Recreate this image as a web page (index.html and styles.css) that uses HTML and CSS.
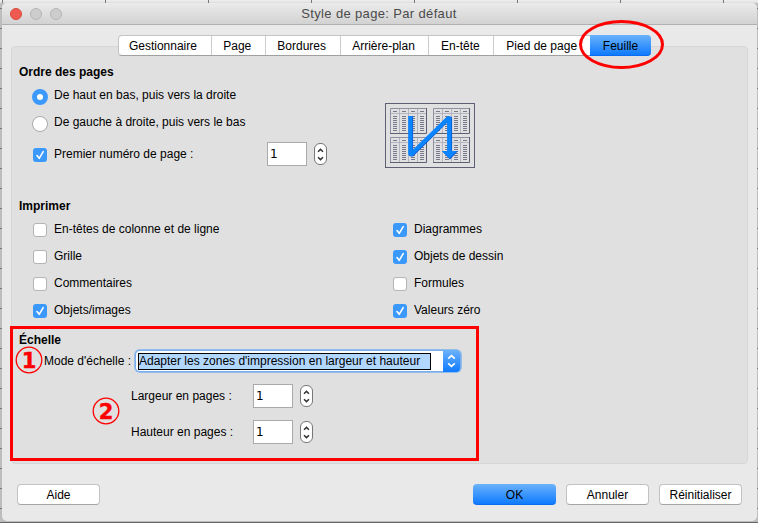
FILE: index.html
```html
<!DOCTYPE html>
<html lang="fr">
<head>
<meta charset="utf-8">
<title>Style de page: Par défaut</title>
<link rel="stylesheet" href="styles.css">
</head>
<body>
<svg width="0" height="0" class="defs" aria-hidden="true">
  <symbol id="check" viewBox="0 0 14 14"><path d="M4 7.6 6.2 10.3 10.2 3.7" fill="none" stroke="#fff" stroke-width="1.6" stroke-linecap="round" stroke-linejoin="round"/></symbol>
  <symbol id="arrows" viewBox="0 0 11 20"><path d="M3 7.8 5.5 5.4 8 7.8M3 13.2 5.5 15.6 8 13.2" fill="none" stroke="#333" stroke-width="1.5"/></symbol>
  <pattern id="lines" width="9" height="2" patternUnits="userSpaceOnUse"><path d="M3 .5h4" stroke="#77798a"/></pattern>
  <symbol id="sheet" viewBox="0 0 37 26">
    <path d="M0 5.5h36M9.5 0v25M18.5 0v25M27.5 0v25" stroke="#b4b5c2" fill="none"/>
    <path d="M3 3.5h4M12 3.5h4M21 3.5h4M30 3.5h4" stroke="#77798a"/>
    <rect y="8" width="36" height="16" fill="url(#lines)"/>
    <path d="M.5 26V.5H37" fill="none" stroke="#9092a3"/>
    <path d="M0 25.5h36.5V0" fill="none" stroke="#5d5f75"/>
  </symbol>
</svg>
<div class="window">
  <header class="titlebar">
    <div class="lights"><i class="close"></i><i></i><i></i></div>
    <h1>Style de page: Par défaut</h1>
  </header>
  <nav class="tabs">
    <a class="t1">Gestionnaire</a><a class="t2">Page</a><a class="t3">Bordures</a><a class="t4">Arrière-plan</a><a class="t5">En-tête</a><a class="t6">Pied de page</a><a class="t7 active">Feuille</a>
  </nav>
  <main class="panel">
    <section class="order">
      <h2>Ordre des pages</h2>
      <div class="order-body">
        <div class="order-options">
          <label class="row"><i class="radio on"></i><span>De haut en bas, puis vers la droite</span></label>
          <label class="row"><i class="radio"></i><span>De gauche à droite, puis vers le bas</span></label>
          <div class="row first-page"><svg class="box on"><use href="#check"/></svg><span>Premier numéro de page :</span><b class="field">1</b><svg class="spin"><use href="#arrows"/></svg></div>
        </div>
        <svg class="preview" viewBox="0 0 90 65">
          <rect x=".5" y=".5" width="89" height="64" fill="none" stroke="#5d5f75"/>
          <use href="#sheet" x="5" y="5" width="37" height="26"/><use href="#sheet" x="48" y="5" width="37" height="26"/>
          <use href="#sheet" x="5" y="34" width="37" height="26"/><use href="#sheet" x="48" y="34" width="37" height="26"/>
          <path d="M26 13V51.5H27L63.5 15.5H65V49" fill="none" stroke="#0b58d0" stroke-width="4.2" stroke-linejoin="round"/>
          <path d="M57 48H73L65 56.5Z" fill="#0b58d0"/>
          <path d="M25.3 13V51H26.4L63 15.4H64.2V50" fill="none" stroke="#0a84ff" stroke-width="4.2" stroke-linejoin="round"/>
          <path d="M57 48H72L64.5 55.5Z" fill="#0a84ff"/>
        </svg>
      </div>
    </section>
    <section class="print">
      <h2>Imprimer</h2>
      <div class="print-grid">
        <label class="row"><svg class="box"></svg><span>En-têtes de colonne et de ligne</span></label>
        <label class="row"><svg class="box on"><use href="#check"/></svg><span>Diagrammes</span></label>
        <label class="row"><svg class="box"></svg><span>Grille</span></label>
        <label class="row"><svg class="box on"><use href="#check"/></svg><span>Objets de dessin</span></label>
        <label class="row"><svg class="box"></svg><span>Commentaires</span></label>
        <label class="row"><svg class="box"></svg><span>Formules</span></label>
        <label class="row"><svg class="box on"><use href="#check"/></svg><span>Objets/images</span></label>
        <label class="row"><svg class="box on"><use href="#check"/></svg><span>Valeurs zéro</span></label>
      </div>
    </section>
    <section class="scale">
      <h2>Échelle</h2>
      <div class="mode"><span class="label">Mode d'échelle :</span>
        <div class="combo"><span class="selected">Adapter les zones d'impression en largeur et hauteur</span><svg class="combo-btn" viewBox="0 0 17 22"><path d="M5.2 8.7 8.5 5.6 11.8 8.7M5.2 13.3 8.5 16.4 11.8 13.3" fill="none" stroke="#fff" stroke-width="1.7"/></svg></div>
      </div>
      <div class="size"><span class="label">Largeur en pages :</span><b class="field">1</b><svg class="spin"><use href="#arrows"/></svg></div>
      <div class="size"><span class="label">Hauteur en pages :</span><b class="field">1</b><svg class="spin"><use href="#arrows"/></svg></div>
    </section>
  </main>
  <footer class="buttons">
    <button class="help">Aide</button><button class="primary">OK</button><button>Annuler</button><button>Réinitialiser</button>
  </footer>
</div>
<svg class="marks" viewBox="0 0 758 523">
  <g fill="none" stroke="#f00">
    <ellipse cx="621.5" cy="44.5" rx="41" ry="23" stroke-width="3"/>
    <rect x="11.5" y="327.5" width="466" height="132" stroke-width="3"/>
    <circle cx="29" cy="360" r="12.8" stroke-width="1.3"/>
    <circle cx="106" cy="411" r="12.8" stroke-width="1.3"/>
  </g>
  <text x="29" y="368">1</text><text x="106" y="419">2</text>
</svg>
</body>
</html>
```

FILE: styles.css
```css
* { box-sizing: border-box; }
body {
  margin: 0;
  width: 758px;
  height: 523px;
  padding: 3px 1px 2px 2px;
  overflow: hidden;
  background:
    repeating-linear-gradient(90deg, transparent 0 2px, #777 2px 3px, transparent 3px 103px) 0 0 / 100% 3px no-repeat,
    linear-gradient(#f0f0f0, #ddd) 0 0 / 100% 3px no-repeat,
    linear-gradient(#666, #666) 0 100% / 100% 1px no-repeat,
    repeating-linear-gradient(transparent 0 8px, #777 8px 9px, transparent 9px 20px),
    #bdbdbd;
  font: 12px/14px "Liberation Sans", Arial, sans-serif;
  color: #000;
}
.defs { position: absolute; }
h1, h2 { margin: 0; }
.window {
  height: 518px;
  border-radius: 5px;
  background: #e9e9e9;
  overflow: hidden;
}
.titlebar {
  display: grid;
  grid-template-columns: 60px 1fr 60px;
  align-items: center;
  height: 22px;
  border-bottom: 1px solid #b0b0b0;
  background: linear-gradient(#ebebeb, #d2d2d2);
}
.titlebar h1 {
  justify-self: center;
  padding: 1px 1px 0 0;
  font-size: 13px;
  font-weight: 400;
  letter-spacing: .35px;
  color: #4a4a4a;
}
.lights { display: flex; gap: 8px; padding-left: 8px; }
.lights i { width: 12px; height: 12px; border: 1px solid #b5b5b5; border-radius: 50%; background: #cdcdcd; }
.lights .close { border-color: #d9483f; background: #ef5a51; }

.tabs {
  position: relative;
  display: flex;
  width: 533px;
  height: 21px;
  margin: 10px 0 -10px 116px;
  border: 1px solid #c4c4c4;
  border-bottom-color: #a0a0a0;
  border-radius: 4px;
  background: #fff;
}
.tabs a { padding-right: 2px; text-align: center; line-height: 20px; border-right: 1px solid #ccc; }
.tabs .t1 { width: 93px; padding-right: 4px; }
.t2 { width: 54px; }
.t3 { width: 75px; }
.t4 { width: 89px; }
.t5 { width: 65px; }
.tabs .t6 { width: 96px; padding-right: 1px; border-right: 0; }
.tabs .active {
  width: 61px;
  height: 21px;
  margin: -1px -1px 0 0;
  padding: 0;
  border: 0;
  border-bottom: 1px solid #0a6cf0;
  border-radius: 0 4px 4px 0;
  line-height: 22px;
  background: linear-gradient(#6bb2fa, #0f7bff);
}
.panel {
  width: 737px;
  height: 418px;
  margin-left: 9px;
  padding: 18px 0 0 7px;
  border: 1px solid #d6d6d6;
  border-radius: 4px;
  background: #e0e0e0;
}
h2 { font-size: 12px; line-height: 14px; }
.order { height: 134px; }
.order-body { display: flex; }
.order-options { width: 366px; padding: 4px 0 0 14px; }
.row { display: flex; align-items: center; height: 27px; }
.row > span { margin: -2px 0 0 7px; }
.radio { width: 16px; height: 16px; margin-left: -1px; border: 1px solid #aaa; border-radius: 50%; background: #fff; }
.row .radio + span { margin: -4px 0 0 6px; }
.radio.on { border: 5px solid #3b99fc; }
.box { width: 14px; height: 14px; border-radius: 3px; background: #fff; box-shadow: inset 0 0 0 1px #b4b4b4; }
.box.on { background: #3b99fc; box-shadow: none; }
.first-page { height: 34px; }
.first-page .box { margin-top: 2px; }
.row.first-page > span { width: 213px; margin-top: 0; }
.field {
  width: 40px;
  height: 24px;
  padding-left: 2px;
  border: 1px solid #aaa;
  background: #fff;
  font: 12px/22px "DejaVu Sans", sans-serif;
}
.spin { width: 13px; height: 22px; margin-left: 7px; border: 1px solid #777; border-radius: 6px; background: #fff; }
.preview { width: 90px; height: 65px; margin-top: 24px; }
.print { height: 134px; }
.print-grid { display: grid; grid-template-columns: 360px 1fr; padding: 3px 0 0 14px; }
.mode { display: flex; align-items: center; margin-top: 3px; padding-left: 25px; height: 22px; }
.mode .label { width: 92px; }
.combo {
  display: flex;
  align-items: center;
  width: 324px;
  height: 20px;
  padding-left: 2px;
  border-radius: 4px;
  background: #fff;
  box-shadow: 0 0 0 1px #78aeea, 0 0 0 2px #94bdec;
}
.selected { width: 293px; height: 17px; border: 1px solid #000; background: #b2d7ff; line-height: 15px; white-space: nowrap; }
.combo-btn { width: 17px; height: 22px; margin-left: auto; border-radius: 0 4px 4px 0; background: linear-gradient(#6bb2fa, #0f7bff); }
.size { display: flex; align-items: center; height: 36px; padding-left: 112px; }
.size .label { width: 122px; }
.mode + .size { margin-top: 6px; }
.buttons { display: flex; gap: 10px; padding: 20px 15px 0 15px; }
button {
  width: 83px;
  height: 21px;
  padding: 0;
  border: 1px solid #c2c2c2;
  border-bottom-color: #a5a5a5;
  border-radius: 4px;
  background: #fff;
  font: inherit;
}
.help { margin-right: auto; }
.primary { padding-top: 1px; border: 0; border-bottom: 1px solid #0a6cf0; background: linear-gradient(#6bb2fa, #0f7bff); }
.marks { position: absolute; inset: 0; width: 758px; height: 523px; }
.marks text { fill: #f00; stroke: #f00; stroke-width: .4px; font: bold 21px "DejaVu Sans", sans-serif; text-anchor: middle; }
```
